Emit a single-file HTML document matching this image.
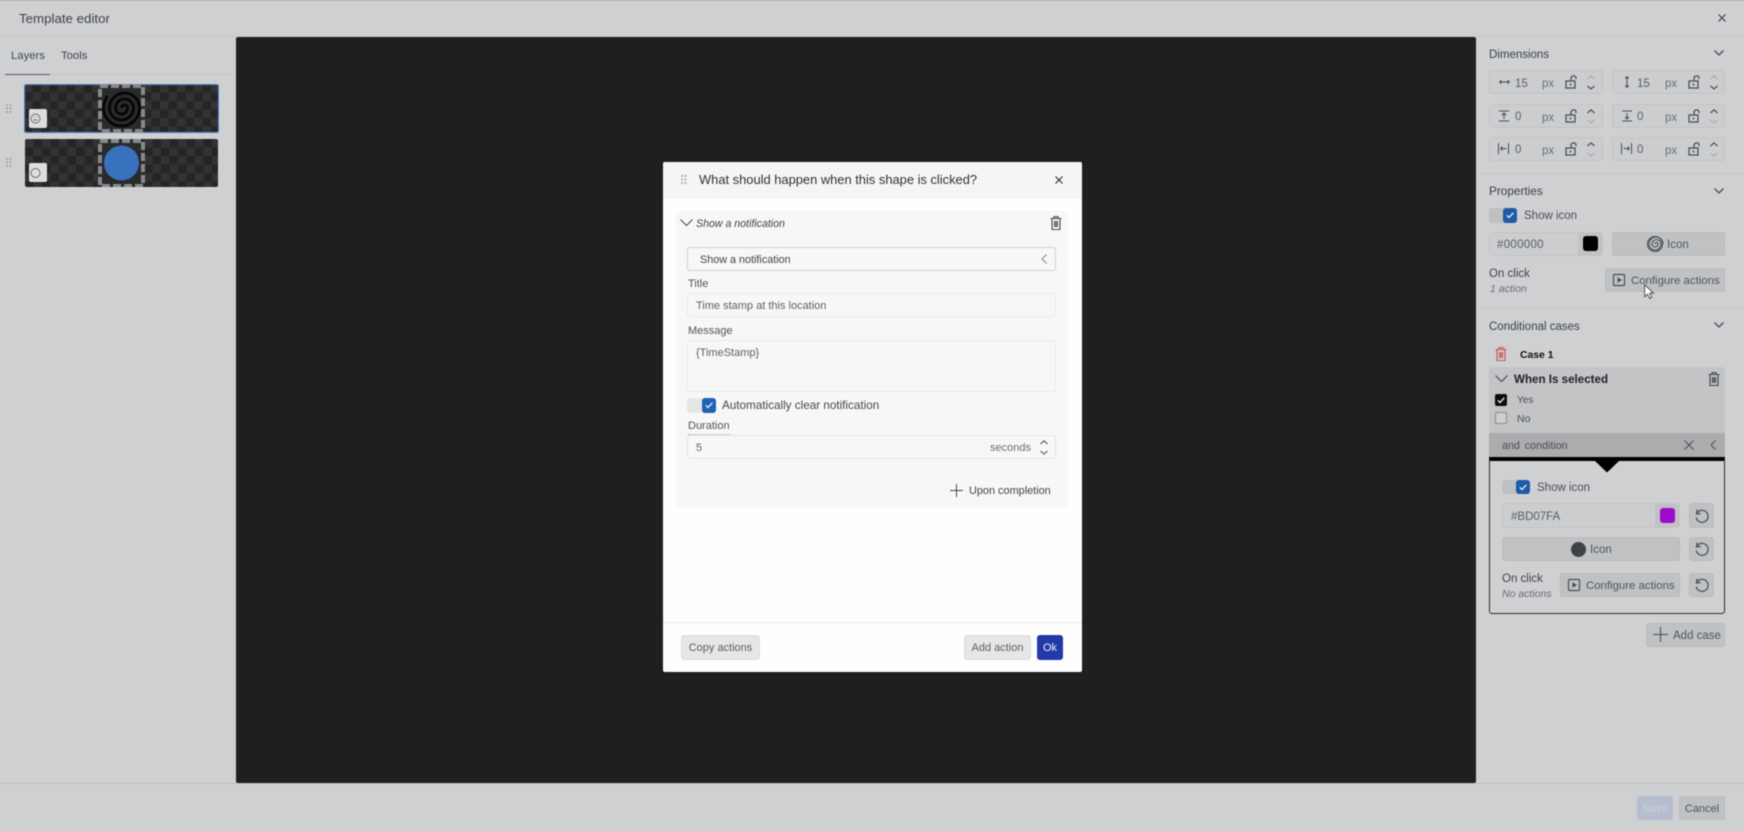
<!DOCTYPE html>
<html lang="en"><head><meta charset="utf-8"><title>Template editor</title>
<style>
html,body{margin:0;padding:0;width:1744px;height:831px;overflow:hidden;background:#cfd0d2}
body{font-family:"Liberation Sans",sans-serif;color:#3f434a;position:relative;filter:blur(.5px)}
.a,.t,.b,svg.i{position:absolute}
.t{white-space:nowrap;line-height:16px;font-size:11.5px;height:16px;transform:translateY(1px)}
.h{color:#3b4048;font-size:11.5px}
.f{position:absolute;box-sizing:border-box;background:#cbcdcf;border:1px solid #c0c2c4;border-radius:3px}
.b{box-sizing:border-box;background:#bfc1c3;border:1px solid #b9bbbd;border-radius:3px;color:#50545a;font-size:11.5px;text-align:center}
.m{position:absolute;box-sizing:border-box;background:#f7f7f7;border:1px solid #e9e9e9;border-radius:3px}
svg.i{fill:none;stroke:#484c52;stroke-width:1;overflow:visible}
</style></head><body>
<svg width="0" height="0" style="position:absolute"><defs>
<symbol id="lock" viewBox="0 0 14 14" overflow="visible"><rect x="1" y="6" width="9" height="7" fill="none" stroke="#4c5056" stroke-width="1.3"/><circle cx="5.5" cy="9.5" r="1" fill="#4c5056"/><path d="M6 6V3.500a2.600 2.600 0 0 1 5-1v1.500" fill="none" stroke="#4c5056" stroke-width="1.3"/></symbol>
<symbol id="sp" viewBox="0 0 10 18" overflow="visible"><path d="M1.500 6 5 2.800 8.500 6M1.500 13 5 16 8.500 13" fill="none" stroke="#55595f" stroke-width="1.100"/></symbol>
<symbol id="spd" viewBox="0 0 10 18" overflow="visible"><path d="M1.500 6 5 2.800 8.500 6" fill="none" stroke="#a7a9ab" stroke-width="1.100"/><path d="M1.500 13 5 16 8.500 13" fill="none" stroke="#4c5056" stroke-width="1.200"/></symbol>
<symbol id="spu" viewBox="0 0 10 18" overflow="visible"><path d="M1.500 6 5 2.800 8.500 6" fill="none" stroke="#4c5056" stroke-width="1.200"/><path d="M1.500 13 5 16 8.500 13" fill="none" stroke="#a7a9ab" stroke-width="1.100"/></symbol>
<symbol id="tr" viewBox="0 0 12 14" overflow="visible"><path d="M.5 2.500h11M4 2.500V.7h4v1.800M2 2.500v11h8v-11M4.500 5v6M6 5v6M7.500 5v6" fill="none" stroke="currentColor" stroke-width="1.100"/></symbol>
<symbol id="rs" viewBox="0 0 16 16" overflow="visible"><path d="M3.200 1.500 2.500 6l4.200-.4M2.800 5.500a6 6 0 1 1-.6 4" fill="none" stroke="#4a4e54" stroke-width="1.200"/></symbol>
<symbol id="pl" viewBox="0 0 14 14" overflow="visible"><rect x="1.500" y="1.500" width="11" height="11" rx="1" fill="none" stroke="#4a4e54" stroke-width="1.200"/><path d="M5.500 4.200v5.600L10 7z" fill="#4a4e54"/></symbol>
<symbol id="ck" viewBox="0 0 14 14" overflow="visible"><path d="M3.800 7.300 6 9.500 10.300 4.800" fill="none" stroke="#e8eef6" stroke-width="1.300"/></symbol>
<symbol id="grip" viewBox="0 0 6 10" overflow="visible"><path d="M1 1h.01M4.500 1h.01M1 4.500h.01M4.500 4.500h.01M1 8h.01M4.500 8h.01" fill="none" stroke="#9a9c9f" stroke-width="1.700" stroke-linecap="square"/></symbol>
<pattern id="chk" width="17" height="17" patternUnits="userSpaceOnUse"><rect width="17" height="17" fill="#252525"/><rect width="8.500" height="8.500" fill="#333"/><rect x="8.500" y="8.500" width="8.500" height="8.500" fill="#333"/></pattern>
</defs></svg>

<!-- header / frames -->
<div class="a" style="left:0;top:0;width:1744px;height:1px;background:#a9abad"></div>
<div class="a" style="left:0;top:36px;width:1744px;height:1px;background:#c4c6c8"></div>
<div class="t" style="left:19px;top:10px;font-size:13.300px;color:#3f434a">Template editor</div>
<svg class="i" style="left:1717px;top:13px;stroke:#3e4248;stroke-width:1.200" width="10" height="10"><path d="M1.500 1.500l7 7M8.500 1.500l-7 7"/></svg>
<div class="a" style="left:236px;top:37px;width:1240px;height:746px;background:#1f1f1f;border-radius:2px"></div>
<div class="a" style="left:0;top:783px;width:1744px;height:1px;background:#bcbec0"></div>

<!-- left panel -->
<div class="t" style="left:11px;top:47px;font-size:11.300px;color:#3a4a5c">Layers</div>
<div class="t" style="left:61px;top:47px;font-size:11.300px;color:#3f434a">Tools</div>
<div class="a" style="left:0;top:74px;width:236px;height:1px;background:#c4c6c8"></div>
<div class="a" style="left:5px;top:74px;width:45px;height:1px;background:#55595f"></div>
<svg class="i" style="left:6px;top:104px" width="6" height="10"><use href="#grip"/></svg>
<svg class="i" style="left:6px;top:158px" width="6" height="10"><use href="#grip"/></svg>

<svg class="a" style="left:24px;top:84px;position:absolute" width="195" height="49">
<rect x=".5" y=".5" width="194" height="48" rx="2" fill="url(#chk)" stroke="#4a7fc4" stroke-width="1.200"/>
<rect x="76" y="2" width="43" height="45" fill="#2a2a2a"/>
<path d="M98 24a3 3 0 0 1 6 0a6 6 0 0 1-12 0a9 9 0 0 1 18 0a12 12 0 0 1-24 0a15 15 0 0 1 30 0a18 18 0 0 1-36 0a20 20 0 0 1 4-12" fill="none" stroke="#050505" stroke-width="2.800" transform="translate(-.5 0)"/>
<rect x="76" y="2" width="43" height="45" fill="none" stroke="#87898c" stroke-width="4" stroke-dasharray="8 3"/>
<rect x="5" y="25" width="18" height="19" rx="2" fill="#dedede"/><circle cx="11.500" cy="34.500" r="4.500" fill="none" stroke="#6a6a6a" stroke-width="1"/><path d="M9.500 36h4M9.500 33h.8M12.700 33h.8" stroke="#6a6a6a" fill="none"/>
</svg>
<svg class="a" style="left:25px;top:139px;position:absolute" width="194" height="48">
<rect width="193" height="48" rx="2" fill="url(#chk)"/>
<rect x="75" y="2" width="43" height="45" fill="#2a2a2a"/>
<rect x="75" y="2" width="43" height="45" fill="none" stroke="#87898c" stroke-width="4" stroke-dasharray="8 3"/>
<circle cx="96.500" cy="24" r="17.500" fill="#3872bf"/>
<rect x="4" y="24" width="18" height="19" rx="2" fill="#dedede"/><circle cx="10.500" cy="34" r="4.500" fill="none" stroke="#6a6a6a" stroke-width="1"/>
</svg>

<!-- Dimensions -->
<div class="t h" style="left:1489px;top:46px">Dimensions</div>
<svg class="i" style="left:1713px;top:49px;stroke-width:1.300" width="12" height="8"><path d="M1.500 1.500 6 6l4.500-4.500"/></svg>

<div class="f" style="left:1489px;top:70px;width:114px;height:24px"></div>
<div class="f" style="left:1612px;top:70px;width:113px;height:24px"></div>
<div class="f" style="left:1489px;top:104px;width:114px;height:24px"></div>
<div class="f" style="left:1612px;top:104px;width:113px;height:24px"></div>
<div class="f" style="left:1489px;top:137px;width:114px;height:24px"></div>
<div class="f" style="left:1612px;top:137px;width:113px;height:24px"></div>

<svg class="i" style="left:1499px;top:76px" width="12" height="12"><path d="M.5 6h10M.5 6l2-1.800M.5 6l2 1.800M10.500 6l-2-1.800M10.500 6l-2 1.800"/></svg>
<div class="t" style="left:1515px;top:75px;color:#5a5e64;font-size:11.500px">15</div>
<div class="t" style="left:1542px;top:75px;color:#6a6e74;font-size:11.500px">px</div>
<svg class="i" style="left:1565px;top:75px;stroke:none" width="14" height="14"><use href="#lock"/></svg>
<svg class="i" style="left:1586px;top:73px;stroke:none" width="10" height="18"><use href="#spd"/></svg>

<svg class="i" style="left:1621px;top:76px" width="12" height="12"><path d="M6 .5v11M6 .5 4.200 2.500M6 .5l1.800 2M6 11.500 4.200 9.500M6 11.500l1.800-2"/></svg>
<div class="t" style="left:1637px;top:75px;color:#5a5e64;font-size:11.500px">15</div>
<div class="t" style="left:1665px;top:75px;color:#6a6e74;font-size:11.500px">px</div>
<svg class="i" style="left:1688px;top:75px;stroke:none" width="14" height="14"><use href="#lock"/></svg>
<svg class="i" style="left:1709px;top:73px;stroke:none" width="10" height="18"><use href="#spd"/></svg>

<svg class="i" style="left:1499px;top:110px" width="12" height="12"><path d="M0 1h10M0 11h10M5 9V3.500M3 5l2-2 2 2"/></svg>
<div class="t" style="left:1515px;top:108px;color:#5a5e64;font-size:11.500px">0</div>
<div class="t" style="left:1542px;top:109px;color:#6a6e74;font-size:11.500px">px</div>
<svg class="i" style="left:1565px;top:109px;stroke:none" width="14" height="14"><use href="#lock"/></svg>
<svg class="i" style="left:1586px;top:107px;stroke:none" width="10" height="18"><use href="#spu"/></svg>

<svg class="i" style="left:1622px;top:110px" width="12" height="12"><path d="M0 1h10M0 11h10M5 3v5.500M3 7l2 2 2-2"/></svg>
<div class="t" style="left:1637px;top:108px;color:#5a5e64;font-size:11.500px">0</div>
<div class="t" style="left:1665px;top:109px;color:#6a6e74;font-size:11.500px">px</div>
<svg class="i" style="left:1688px;top:109px;stroke:none" width="14" height="14"><use href="#lock"/></svg>
<svg class="i" style="left:1709px;top:107px;stroke:none" width="10" height="18"><use href="#spu"/></svg>

<svg class="i" style="left:1498px;top:143px" width="12" height="12"><path d="M.5 0v11M10.500 0v11M2.500 5.500h6M2.500 5.500l2-2M2.500 5.500l2 2"/></svg>
<div class="t" style="left:1515px;top:141px;color:#5a5e64;font-size:11.500px">0</div>
<div class="t" style="left:1542px;top:142px;color:#6a6e74;font-size:11.500px">px</div>
<svg class="i" style="left:1565px;top:142px;stroke:none" width="14" height="14"><use href="#lock"/></svg>
<svg class="i" style="left:1586px;top:140px;stroke:none" width="10" height="18"><use href="#spu"/></svg>

<svg class="i" style="left:1621px;top:143px" width="12" height="12"><path d="M.5 0v11M10.500 0v11M2.500 5.500h6M8.500 5.500l-2-2M8.500 5.500l-2 2"/></svg>
<div class="t" style="left:1637px;top:141px;color:#5a5e64;font-size:11.500px">0</div>
<div class="t" style="left:1665px;top:142px;color:#6a6e74;font-size:11.500px">px</div>
<svg class="i" style="left:1688px;top:142px;stroke:none" width="14" height="14"><use href="#lock"/></svg>
<svg class="i" style="left:1709px;top:140px;stroke:none" width="10" height="18"><use href="#spu"/></svg>

<div class="a" style="left:1477px;top:173px;width:267px;height:1px;background:#c6c8ca"></div>

<!-- Properties -->
<div class="t h" style="left:1489px;top:182px;font-size:11.800px">Properties</div>
<svg class="i" style="left:1713px;top:187px;stroke-width:1.300" width="12" height="8"><path d="M1.500 1.500 6 6l4.500-4.500"/></svg>
<div class="a" style="left:1489px;top:208px;width:28px;height:15px;background:#bec0c2;border-radius:3px"></div>
<div class="a" style="left:1503px;top:208px;width:14px;height:15px;background:#1e5aa6;border-radius:3px"></div>
<svg class="i" style="left:1503px;top:208px;stroke:none" width="14" height="14"><use href="#ck"/></svg>
<div class="t" style="left:1524px;top:207px;color:#4a4e54">Show icon</div>

<div class="f" style="left:1489px;top:232px;width:114px;height:24px"></div>
<div class="a" style="left:1578px;top:233px;width:24px;height:22px;background:#c0c2c4;border-radius:0 3px 3px 0"></div>
<div class="a" style="left:1583px;top:236px;width:15px;height:15px;background:#000;border-radius:3px"></div>
<div class="t" style="left:1497px;top:236px;color:#5a5e64;letter-spacing:.3px">#000000</div>
<div class="b" style="left:1612px;top:232px;width:113px;height:24px"></div>
<svg class="i" style="left:1647px;top:236px;stroke-width:1.100" width="16" height="16"><path d="M8 8a1.500 1.500 0 0 1 3 0a3 3 0 0 1-6 0a4.500 4.500 0 0 1 9 0a6 6 0 0 1-12 0a7 7 0 0 1 14 0"/><circle cx="8" cy="8" r="7.500"/></svg>
<div class="t" style="left:1667px;top:236px;color:#50545a">Icon</div>

<div class="t" style="left:1489px;top:265px;color:#3f434a">On click</div>
<div class="t" style="left:1490px;top:280px;color:#686c72;font-style:italic;font-size:10.500px">1 action</div>
<div class="b" style="left:1605px;top:268px;width:120px;height:24px"></div>
<svg class="i" style="left:1612px;top:273px;stroke:none" width="14" height="14"><use href="#pl"/></svg>
<div class="t" style="left:1631px;top:272px;color:#50545a;font-size:11.400px">Configure actions</div>
<svg class="i" style="left:1644px;top:284px;stroke:#333;fill:#fff;stroke-width:.8" width="11" height="16"><path d="M.7.700v12l3-2.600 2 4.300 2-1-2-4.200h3.800z"/></svg>

<div class="a" style="left:1477px;top:308px;width:267px;height:1px;background:#c6c8ca"></div>

<!-- Conditional cases -->
<div class="t h" style="left:1489px;top:318px">Conditional cases</div>
<svg class="i" style="left:1713px;top:321px;stroke-width:1.300" width="12" height="8"><path d="M1.500 1.500 6 6l4.500-4.500"/></svg>
<svg class="i" style="left:1495px;top:347px;stroke:none;color:#c8524f" width="12" height="14"><use href="#tr"/></svg>
<div class="t" style="left:1520px;top:347px;color:#111;font-weight:700;font-size:10.400px">Case 1</div>

<div class="a" style="left:1489px;top:367px;width:236px;height:66px;background:#c2c4c6;border-radius:3px 3px 0 0"></div>
<svg class="i" style="left:1495px;top:375px;stroke:#3f434a" width="14" height="8"><path d="M.5.500 6.500 6.500l6-6"/></svg>
<div class="t" style="left:1514px;top:371px;color:#1e2024;font-weight:700;font-size:11.600px">When Is selected</div>
<svg class="i" style="left:1708px;top:372px;stroke:none;color:#3f434a" width="12" height="14"><use href="#tr"/></svg>
<div class="a" style="left:1495px;top:394px;width:12px;height:12px;background:#0c0c0c;border-radius:2px"></div>
<svg class="i" style="left:1494px;top:393px;stroke:none" width="14" height="14"><use href="#ck"/></svg>
<div class="t" style="left:1517px;top:392px;color:#4a4e54;font-size:10px">Yes</div>
<div class="a" style="left:1495px;top:412px;width:12px;height:12px;box-sizing:border-box;border:1px solid #87898c;border-radius:2px;background:#cfd0d2"></div>
<div class="t" style="left:1517px;top:410px;color:#4a4e54;font-size:10.500px">No</div>
<div class="a" style="left:1489px;top:433px;width:236px;height:24px;background:#abacae"></div>
<div class="t" style="left:1502px;top:437px;color:#484c52;font-size:10.700px;word-spacing:2px">and condition</div>
<svg class="i" style="left:1684px;top:440px;stroke:#4a4e54" width="10" height="10"><path d="M.5.500l9 9M9.500.500l-9 9"/></svg>
<svg class="i" style="left:1710px;top:440px;stroke:#4a4e54" width="6" height="10"><path d="M5.500.500 1 5l4.500 4.500"/></svg>

<div class="a" style="left:1489px;top:457px;width:236px;height:157px;box-sizing:border-box;border:1px solid #2c2e31;border-top:4px solid #000;border-radius:0 0 3px 3px"></div>
<svg class="i" style="left:1595px;top:461px;stroke:none;fill:#000" width="24" height="12"><path d="M0 0h24L12 11.500z"/></svg>
<div class="a" style="left:1502px;top:480px;width:28px;height:14px;background:#bec0c2;border-radius:3px"></div>
<div class="a" style="left:1516px;top:480px;width:14px;height:14px;background:#1e5aa6;border-radius:3px"></div>
<svg class="i" style="left:1516px;top:480px;stroke:none" width="14" height="14"><use href="#ck"/></svg>
<div class="t" style="left:1537px;top:479px;color:#4a4e54">Show icon</div>

<div class="f" style="left:1502px;top:503px;width:178px;height:25px"></div>
<div class="a" style="left:1655px;top:504px;width:24px;height:23px;background:#c0c2c4;border-radius:0 3px 3px 0"></div>
<div class="a" style="left:1660px;top:508px;width:15px;height:15px;background:#9e0bcc;border-radius:3px"></div>
<div class="t" style="left:1511px;top:508px;color:#5a5e64">#BD07FA</div>
<div class="b" style="left:1689px;top:503px;width:25px;height:25px"></div>
<svg class="i" style="left:1694px;top:508px;stroke:none" width="16" height="16"><use href="#rs"/></svg>

<div class="b" style="left:1502px;top:537px;width:178px;height:24px"></div>
<div class="a" style="left:1571px;top:542px;width:15px;height:15px;border-radius:50%;background:#3d4149"></div>
<div class="t" style="left:1590px;top:541px;color:#50545a">Icon</div>
<div class="b" style="left:1689px;top:537px;width:25px;height:24px"></div>
<svg class="i" style="left:1694px;top:541px;stroke:none" width="16" height="16"><use href="#rs"/></svg>

<div class="t" style="left:1502px;top:570px;color:#3f434a">On click</div>
<div class="t" style="left:1502px;top:585px;color:#686c72;font-style:italic;font-size:10.500px">No actions</div>
<div class="b" style="left:1560px;top:573px;width:120px;height:24px"></div>
<svg class="i" style="left:1567px;top:578px;stroke:none" width="14" height="14"><use href="#pl"/></svg>
<div class="t" style="left:1586px;top:577px;color:#50545a;font-size:11.400px">Configure actions</div>
<div class="b" style="left:1689px;top:573px;width:25px;height:24px"></div>
<svg class="i" style="left:1694px;top:577px;stroke:none" width="16" height="16"><use href="#rs"/></svg>

<div class="b" style="left:1646px;top:623px;width:79px;height:24px"></div>
<svg class="i" style="left:1653px;top:627px;stroke:#44484e" width="15" height="15"><path d="M7.500 0v15M0 7.500h15"/></svg>
<div class="t" style="left:1673px;top:627px;color:#50545a">Add case</div>

<!-- footer -->
<div class="b" style="left:1637px;top:796px;width:36px;height:24px;background:#b7bdd0;border-color:#b7bdd0"></div>
<div class="t" style="left:1637px;top:800px;width:36px;text-align:center;color:#cdd0d8;font-size:11px">Save</div>
<div class="b" style="left:1679px;top:796px;width:46px;height:24px"></div>
<div class="t" style="left:1679px;top:800px;width:46px;text-align:center;color:#50545a;font-size:11px">Cancel</div>

<!-- Modal -->
<div class="a" style="left:663px;top:162px;width:419px;height:510px;background:#fefefe;border-radius:2px;overflow:hidden"></div>
<div class="a" style="left:663px;top:162px;width:419px;height:36px;background:#f5f5f5;border-bottom:1px solid #ececec;box-sizing:border-box;border-radius:2px 2px 0 0"></div>
<svg class="i" style="left:681px;top:175px" width="6" height="10"><use href="#grip"/></svg>
<div class="t" style="left:699px;top:171px;font-size:12.900px;color:#2e3238">What should happen when this shape is clicked?</div>
<svg class="i" style="left:1054px;top:175px;stroke:#33373d;stroke-width:1.200" width="10" height="10"><path d="M1.500 1.500l7 7M8.500 1.500l-7 7"/></svg>

<div class="a" style="left:676px;top:211px;width:392px;height:297px;background:#f7f7f7;border-radius:5px"></div>
<svg class="i" style="left:680px;top:219px;stroke:#44484e" width="13" height="8"><path d="M.5.500 6.500 6.500l6-6"/></svg>
<div class="t" style="left:696px;top:215px;font-style:italic;font-size:10.600px;color:#3f434a">Show a notification</div>
<svg class="i" style="left:1050px;top:216px;stroke:none;color:#44484e" width="12" height="14"><use href="#tr"/></svg>

<div class="a" style="left:687px;top:247px;width:369px;height:24px;box-sizing:border-box;background:#f7f7f7;border:1px solid #cfcfcf;border-radius:3px"></div>
<div class="t" style="left:700px;top:251px;font-size:10.800px;color:#3f434a">Show a notification</div>
<svg class="i" style="left:1041px;top:254px;stroke:#888" width="6" height="10"><path d="M5.500.500 1 5l4.500 4.500"/></svg>
<div class="t" style="left:688px;top:275px;font-size:11px;color:#50545a">Title</div>
<div class="m" style="left:687px;top:293px;width:369px;height:24px"></div>
<div class="t" style="left:696px;top:297px;font-size:11px;color:#5c6066">Time stamp at this location</div>
<div class="t" style="left:688px;top:322px;font-size:11px;color:#50545a">Message</div>
<div class="m" style="left:687px;top:340px;width:369px;height:52px"></div>
<div class="t" style="left:696px;top:344px;font-size:11px;color:#5c6066">{TimeStamp}</div>

<div class="a" style="left:687px;top:398px;width:29px;height:15px;background:#e6e6e6;border-radius:3px"></div>
<div class="a" style="left:702px;top:398px;width:14px;height:15px;background:#1f62b8;border-radius:3px"></div>
<svg class="i" style="left:702px;top:398px;stroke:none" width="14" height="14"><use href="#ck"/></svg>
<div class="t" style="left:722px;top:397px;font-size:11.700px;color:#44484e">Automatically clear notification</div>
<div class="t" style="left:688px;top:418px;font-size:11px;color:#50545a;line-height:15px;border-bottom:1px dotted #a8a8a8;height:15px">Duration</div>
<div class="a" style="left:687px;top:435px;width:369px;height:24px;box-sizing:border-box;background:#f7f7f7;border:1px solid #e4e4e4;border-radius:3px"></div>
<div class="t" style="left:696px;top:439px;font-size:11px;color:#5c6066">5</div>
<div class="t" style="left:990px;top:439px;font-size:11px;color:#6a6e74">seconds</div>
<svg class="i" style="left:1039px;top:438px;stroke:none" width="10" height="18"><use href="#sp"/></svg>
<svg class="i" style="left:950px;top:484px;stroke:#44484e" width="13" height="13"><path d="M6.500 0v13M0 6.500h13"/></svg>
<div class="t" style="left:969px;top:482px;font-size:10.900px;color:#3f434a">Upon completion</div>

<div class="a" style="left:663px;top:622px;width:419px;height:1px;background:#eaeaea"></div>
<div class="a" style="left:681px;top:635px;width:79px;height:25px;box-sizing:border-box;background:#e6e6e6;border:1px solid #dedede;border-radius:3px"></div>
<div class="t" style="left:681px;top:639px;width:79px;text-align:center;font-size:11px;color:#595d63">Copy actions</div>
<div class="a" style="left:964px;top:635px;width:67px;height:25px;box-sizing:border-box;background:#e6e6e6;border:1px solid #dedede;border-radius:3px"></div>
<div class="t" style="left:964px;top:639px;width:67px;text-align:center;font-size:11px;color:#595d63">Add action</div>
<div class="a" style="left:1037px;top:635px;width:26px;height:25px;background:#2439a8;border-radius:3px"></div>
<div class="t" style="left:1037px;top:639px;width:26px;text-align:center;font-size:11px;color:#eef">Ok</div>
</body></html>
